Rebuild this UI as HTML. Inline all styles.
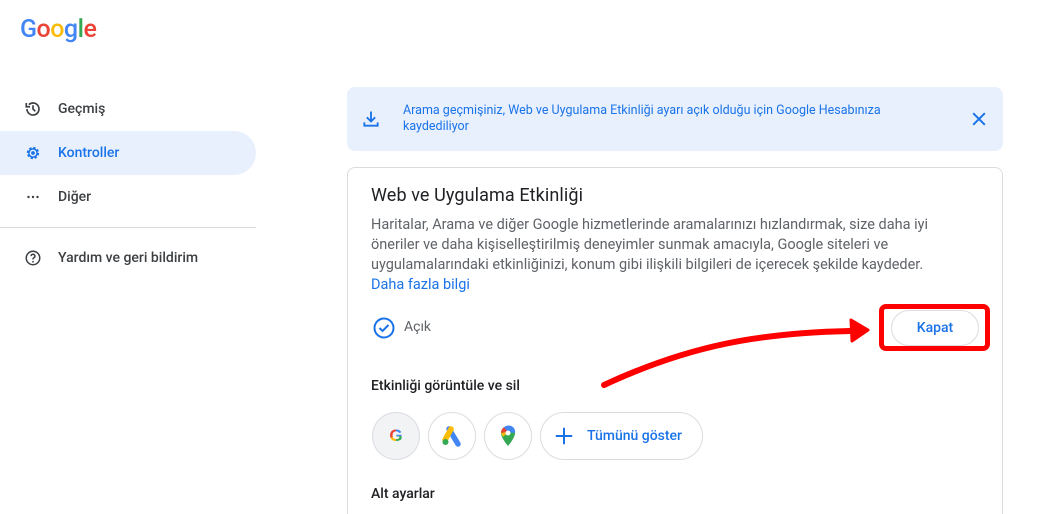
<!DOCTYPE html>
<html><head><meta charset="utf-8"><style>
*{margin:0;padding:0;box-sizing:border-box}
html,body{width:1045px;height:514px;overflow:hidden}
body{background:#fff;font-family:"Roboto","Liberation Sans",sans-serif;position:relative;color:#3c4043}
.abs{position:absolute}
.nav{position:absolute;left:0;width:256px;height:44px;display:flex;align-items:center;font-size:14px;font-weight:500;color:#3c4043}
.nav svg{position:absolute;left:24px}
.nav span{position:absolute;left:58px}
.txt{font-size:14px;letter-spacing:0;white-space:nowrap;color:#5f6368}
.circ{position:absolute;top:412px;width:48px;height:48px;border:1px solid #dadce0;border-radius:50%;display:flex;align-items:center;justify-content:center}
</style></head><body>
<div class="abs" style="left:20px;top:15px;font-size:25px;font-weight:500;letter-spacing:-0.5px"><span style="color:#4285f4">G</span><span style="color:#ea4335">o</span><span style="color:#fbbc05">o</span><span style="color:#4285f4">g</span><span style="color:#34a853">l</span><span style="color:#ea4335">e</span></div>

<div class="nav" style="top:87px"><svg width="18" height="18" viewBox="0 0 24 24"><path d="M4 12a8 8 0 1 0 2.5-5.8M3 4v5h5" fill="none" stroke="#3c4043" stroke-width="2.2"/><path d="M12 7v5l3 3" fill="none" stroke="#3c4043" stroke-width="2.2"/></svg><span>Geçmiş</span></div>
<div class="nav" style="top:131px;background:#e8f0fe;border-radius:0 22px 22px 0;color:#1a73e8"><svg width="18" height="18" viewBox="0 0 24 24"><circle cx="12" cy="12" r="7" fill="none" stroke="#1a73e8" stroke-width="2.5" stroke-dasharray="3.2 2.3"/><circle cx="12" cy="12" r="5.5" fill="none" stroke="#1a73e8" stroke-width="2"/><circle cx="12" cy="12" r="2.5" fill="#1a73e8"/></svg><span>Kontroller</span></div>
<div class="nav" style="top:175px"><svg width="18" height="18" viewBox="0 0 24 24"><circle cx="6" cy="12" r="1.6" fill="#3c4043"/><circle cx="12" cy="12" r="1.6" fill="#3c4043"/><circle cx="18" cy="12" r="1.6" fill="#3c4043"/></svg><span>Diğer</span></div>
<div class="abs" style="left:0;top:227px;width:256px;height:1px;background:#dadce0"></div>
<div class="nav" style="top:236px"><svg width="18" height="18" viewBox="0 0 24 24"><circle cx="12" cy="12" r="9" fill="none" stroke="#3c4043" stroke-width="2"/><path d="M9.5 9.5a2.5 2.5 0 1 1 3.5 2.3c-.7.4-1 .9-1 1.7v.5" fill="none" stroke="#3c4043" stroke-width="2"/><circle cx="12" cy="17" r="1.2" fill="#3c4043"/></svg><span>Yardım ve geri bildirim</span></div>

<div class="abs" style="left:347px;top:87px;width:656px;height:64px;background:#e8f0fe;border-radius:8px">
<svg class="abs" style="left:14px;top:22px" width="20" height="20" viewBox="0 0 24 24"><path d="M12 3v12M7 10l5 5 5-5M4 16v4h16v-4" fill="none" stroke="#1a73e8" stroke-width="2.2"/></svg>
<div class="abs" style="left:56px;top:16px;font-size:12.5px;line-height:16px;color:#1a73e8;letter-spacing:0;white-space:nowrap">Arama geçmişiniz, Web ve Uygulama Etkinliği ayarı açık olduğu için Google Hesabınıza<br>kaydediliyor</div>
<svg class="abs" style="left:622px;top:22px" width="20" height="20" viewBox="0 0 24 24"><path d="M5 5l14 14M19 5L5 19" stroke="#1a73e8" stroke-width="2.4"/></svg>
</div>

<div class="abs" style="left:347px;top:167px;width:656px;height:380px;border:1px solid #dadce0;border-radius:8px"></div>
<div class="abs" style="left:371px;top:185px;font-size:18px;color:#202124;letter-spacing:0.1px">Web ve Uygulama Etkinliği</div>
<div class="abs txt" style="left:371px;top:215px;line-height:20px;font-size:14.5px">Haritalar, Arama ve diğer Google hizmetlerinde aramalarınızı hızlandırmak, size daha iyi<br>öneriler ve daha kişiselleştirilmiş deneyimler sunmak amacıyla, Google siteleri ve<br>uygulamalarındaki etkinliğinizi, konum gibi ilişkili bilgileri de içerecek şekilde kaydeder.<br><span style="color:#1a73e8">Daha fazla bilgi</span></div>

<svg class="abs" style="left:372px;top:316px" width="24" height="24" viewBox="0 0 24 24"><circle cx="12" cy="12" r="9.5" fill="none" stroke="#1a73e8" stroke-width="2"/><path d="M7.5 12l3 3 6-6" fill="none" stroke="#1a73e8" stroke-width="2"/></svg>
<div class="abs txt" style="left:404px;top:319px">Açık</div>

<div class="abs" style="left:891px;top:310px;width:88px;height:36px;border:1px solid #dadce0;border-radius:18px;display:flex;align-items:center;justify-content:center;color:#1a73e8;font-size:14px;font-weight:500">Kapat</div>
<div class="abs" style="left:879px;top:304px;width:111px;height:47px;border:5px solid #f00;border-radius:7px"></div>
<svg class="abs" style="left:0;top:0" width="1045" height="514"><path d="M604 385 C690 345 760 333 850 331" fill="none" stroke="#f00" stroke-width="6" stroke-linecap="round"/><path d="M851 320 L868 330 L852 341 Z" fill="#f00" stroke="#f00" stroke-width="3" stroke-linejoin="round"/></svg>

<div class="abs" style="left:371px;top:378px;font-size:14px;color:#202124;font-weight:500">Etkinliği görüntüle ve sil</div>
<div class="circ" style="left:372px;background:#f1f3f4;font-size:17px;font-weight:bold;font-family:'Liberation Sans',sans-serif"><span style="background:conic-gradient(#4285f4 0 25%,#34a853 25% 50%,#fbbc05 50% 70%,#ea4335 70%);-webkit-background-clip:text;color:transparent">G</span></div>
<div class="circ" style="left:428px"><svg width="24" height="24" viewBox="0 0 24 24"><path d="M9 5l9 15" stroke="#4285f4" stroke-width="5.5" stroke-linecap="round"/><path d="M11 5l-6 11" stroke="#fbbc05" stroke-width="5.5" stroke-linecap="round"/><circle cx="5.5" cy="18" r="3" fill="#34a853"/></svg></div>
<div class="circ" style="left:484px"><svg width="20" height="24" viewBox="0 0 20 24"><path d="M10 2a7 7 0 0 0-7 7c0 5 7 13 7 13s7-8 7-13a7 7 0 0 0-7-7z" fill="#34a853"/><path d="M3 9a7 7 0 0 1 3-5.7L10 8z" fill="#ea4335"/><path d="M6 3.3A7 7 0 0 1 15 3l-5 5z" fill="#4285f4"/><path d="M15 3a7 7 0 0 1 2 6l-7-1z" fill="#4285f4"/><path d="M3 9l7-1-5 5z" fill="#fbbc05"/><circle cx="10" cy="9" r="2.5" fill="#fff"/></svg></div>
<div class="abs" style="left:540px;top:412px;width:163px;height:48px;border:1px solid #dadce0;border-radius:24px"></div>
<svg class="abs" style="left:553px;top:425px" width="22" height="22" viewBox="0 0 24 24"><path d="M12 3v18M3 12h18" stroke="#1a73e8" stroke-width="2.2"/></svg>
<div class="abs" style="left:587px;top:428px;font-size:14px;font-weight:500;color:#1a73e8">Tümünü göster</div>
<div class="abs" style="left:371px;top:486px;font-size:14px;color:#202124;font-weight:500">Alt ayarlar</div>
</body></html>
